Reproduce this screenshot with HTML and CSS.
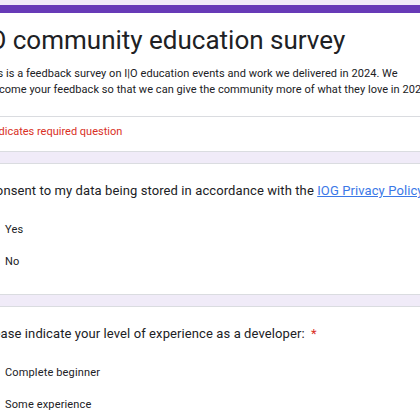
FILE: index.html
```html
<!DOCTYPE html>
<html>
<head>
<meta charset="utf-8">
<link rel="stylesheet" href="styles.css">
</head>
<body>
<div class="page">
  <section class="card head-card">
    <div class="head-main">
      <h1 class="title">I|O community education survey</h1>
      <p class="desc">This is a feedback survey on I|O education events and work we delivered in 2024. We<br>welcome your feedback so that we can give the community more of what they love in 2025.</p>
    </div>
    <div class="required-note">* Indicates required question</div>
  </section>

  <section class="card q-card">
    <div class="question">I consent to my data being stored in accordance with the <a class="link" href="#">IOG Privacy Policy</a></div>
    <div class="options">
      <label class="option"><span class="radio"></span><span class="opt-text">Yes</span></label>
      <label class="option"><span class="radio"></span><span class="opt-text">No</span></label>
    </div>
  </section>

  <section class="card q-card">
    <div class="question">Please indicate your level of experience as a developer: <span class="star">*</span></div>
    <div class="options">
      <label class="option"><span class="radio"></span><span class="opt-text">Complete beginner</span></label>
      <label class="option"><span class="radio"></span><span class="opt-text">Some experience</span></label>
      <label class="option"><span class="radio"></span><span class="opt-text">Experienced</span></label>
    </div>
  </section>
</div>
</body>
</html>
```

FILE: styles.css
```css
html, body {
  margin: 0;
  padding: 0;
  background: #f0ebf8;
  overflow: hidden;
  height: 420px;
}

.page {
  margin-left: -43px;
  width: 700px;
  padding-top: 5px;
  display: flex;
  flex-direction: column;
  gap: 11px;
  font-family: Roboto, "Liberation Sans", sans-serif;
  color: #202124;
}

.card {
  background: #fff;
  border: 1px solid #dadce0;
  border-radius: 8px;
}

.head-card {
  border-top: 8px solid #673ab7;
}

.head-main {
  padding: 11px 24px 18px;
  border-bottom: 1px solid #dadce0;
}

.title {
  margin: 0;
  font-family: Roboto, "Liberation Sans", sans-serif;
  font-weight: 400;
  font-size: 26px;
  line-height: 32px;
  color: #202124;
  white-space: nowrap;
  text-indent: -7px;
}

.desc {
  margin: 10px 0 0;
  font-size: 11px;
  line-height: 16px;
  letter-spacing: 0.05px;
  white-space: nowrap;
}

.required-note {
  padding: 7px 24px 11px;
  font-size: 11px;
  line-height: 16px;
  color: #d93025;
}

.q-card {
  padding: 17px 24px 23px;
}

.question {
  font-size: 13px;
  line-height: 20px;
  letter-spacing: 0.1px;
  white-space: nowrap;
}

.link {
  color: #3b78e7;
  text-decoration: underline;
}

.star {
  color: #d93025;
  margin-left: 3px;
}

.options {
  margin-top: 18px;
  display: flex;
  flex-direction: column;
  gap: 12px;
}

.option {
  display: flex;
  align-items: center;
  gap: 7px;
  height: 20px;
}

.radio {
  width: 16px;
  height: 16px;
  border: 2px solid #5f6368;
  border-radius: 50%;
  box-sizing: border-box;
  flex: none;
}

.opt-text {
  font-size: 11px;
  letter-spacing: 0.15px;
}
```
